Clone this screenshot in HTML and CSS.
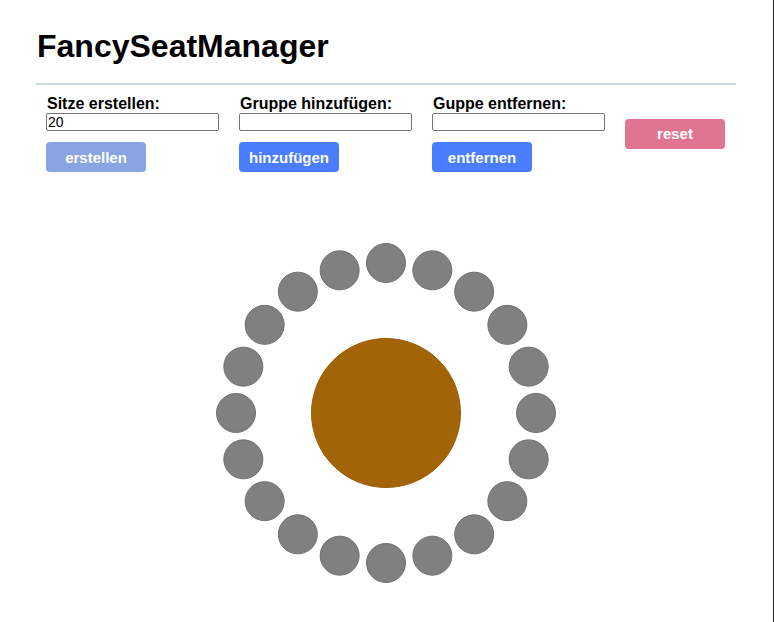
FILE: index.html
```html
<!DOCTYPE html>
<html lang="de">
<head>
<meta charset="utf-8">
<title>FancySeatManager</title>
<link rel="stylesheet" href="styles.css">
</head>
<body>
<div class="page">
  <h1 class="title">FancySeatManager</h1>
  <hr class="divider">
  <div class="controls">
    <div class="group">
      <label class="label">Sitze erstellen:</label>
      <input class="field" type="text" value="20">
      <button class="btn btn-muted">erstellen</button>
    </div>
    <div class="group">
      <label class="label">Gruppe hinzufügen:</label>
      <input class="field" type="text">
      <button class="btn btn-primary">hinzufügen</button>
    </div>
    <div class="group">
      <label class="label">Guppe entfernen:</label>
      <input class="field" type="text">
      <button class="btn btn-primary">entfernen</button>
    </div>
    <div class="group group-reset">
      <button class="btn btn-reset">reset</button>
    </div>
  </div>
  <div class="stage">
    <div class="ring">
      <div class="table"></div>
      <div class="seat" style="--i:0"></div>
      <div class="seat" style="--i:1"></div>
      <div class="seat" style="--i:2"></div>
      <div class="seat" style="--i:3"></div>
      <div class="seat" style="--i:4"></div>
      <div class="seat" style="--i:5"></div>
      <div class="seat" style="--i:6"></div>
      <div class="seat" style="--i:7"></div>
      <div class="seat" style="--i:8"></div>
      <div class="seat" style="--i:9"></div>
      <div class="seat" style="--i:10"></div>
      <div class="seat" style="--i:11"></div>
      <div class="seat" style="--i:12"></div>
      <div class="seat" style="--i:13"></div>
      <div class="seat" style="--i:14"></div>
      <div class="seat" style="--i:15"></div>
      <div class="seat" style="--i:16"></div>
      <div class="seat" style="--i:17"></div>
      <div class="seat" style="--i:18"></div>
      <div class="seat" style="--i:19"></div>
    </div>
  </div>
</div>
</body>
</html>
```
FILE: styles.css
```css
html {
  background: #ffffff;
  border-right: 1px solid #222222;
  min-height: 100%;
  box-sizing: border-box;
}
body {
  margin: 0;
  font-family: "Liberation Sans", Arial, sans-serif;
  color: #000;
}
.page {
  width: 700px;
  padding: 28px 0 0 36px;
}
.title {
  margin: 0;
  font-size: 32px;
  line-height: 37px;
  font-weight: bold;
  padding-left: 1px;
}
.divider {
  margin: 18px 0 0 0;
  border: 0;
  height: 2px;
  background: #cfd8dc;
}
.controls {
  display: flex;
  gap: 20px;
  padding: 10px 0 0 10px;
  align-items: center;
}
.group {
  display: flex;
  flex-direction: column;
  align-items: flex-start;
  width: 173px;
}
.group-reset {
  width: 100px;
}
.label {
  font-size: 16px;
  line-height: 18px;
  font-weight: bold;
  padding-left: 1px;
}
.field {
  box-sizing: border-box;
  width: 173px;
  height: 18px;
  margin: 0;
  padding: 0 1px;
  border: 1px solid #767676;
  border-radius: 2px;
  font-family: "Liberation Sans", Arial, sans-serif;
  font-size: 14px;
}
.btn {
  margin-top: 11px;
  width: 100px;
  height: 30px;
  border: 0;
  border-radius: 4px;
  color: #fff;
  font-family: "Liberation Sans", Arial, sans-serif;
  font-size: 15px;
  font-weight: bold;
  padding: 0;
}
.btn-muted { background: #8aa3e2; }
.btn-primary { background: #4a7dff; }
.btn-reset { background: #e07592; margin-top: 0; }
.stage {
  margin-top: 71px;
  display: flex;
  justify-content: center;
}
.ring {
  position: relative;
  width: 340px;
  height: 340px;
}
.table {
  position: absolute;
  left: 95px;
  top: 95px;
  width: 150px;
  height: 150px;
  box-sizing: border-box;
  border-radius: 50%;
  background: #a36408;
  border: 1px solid #9a5c04;
}
.seat {
  position: absolute;
  left: 150px;
  top: 150px;
  width: 40px;
  height: 40px;
  box-sizing: border-box;
  border-radius: 50%;
  background: #808080;
  border: 1px solid #707070;
  transform: rotate(calc(var(--i) * 18deg)) translateY(-150px) rotate(calc(var(--i) * -18deg));
}
```
